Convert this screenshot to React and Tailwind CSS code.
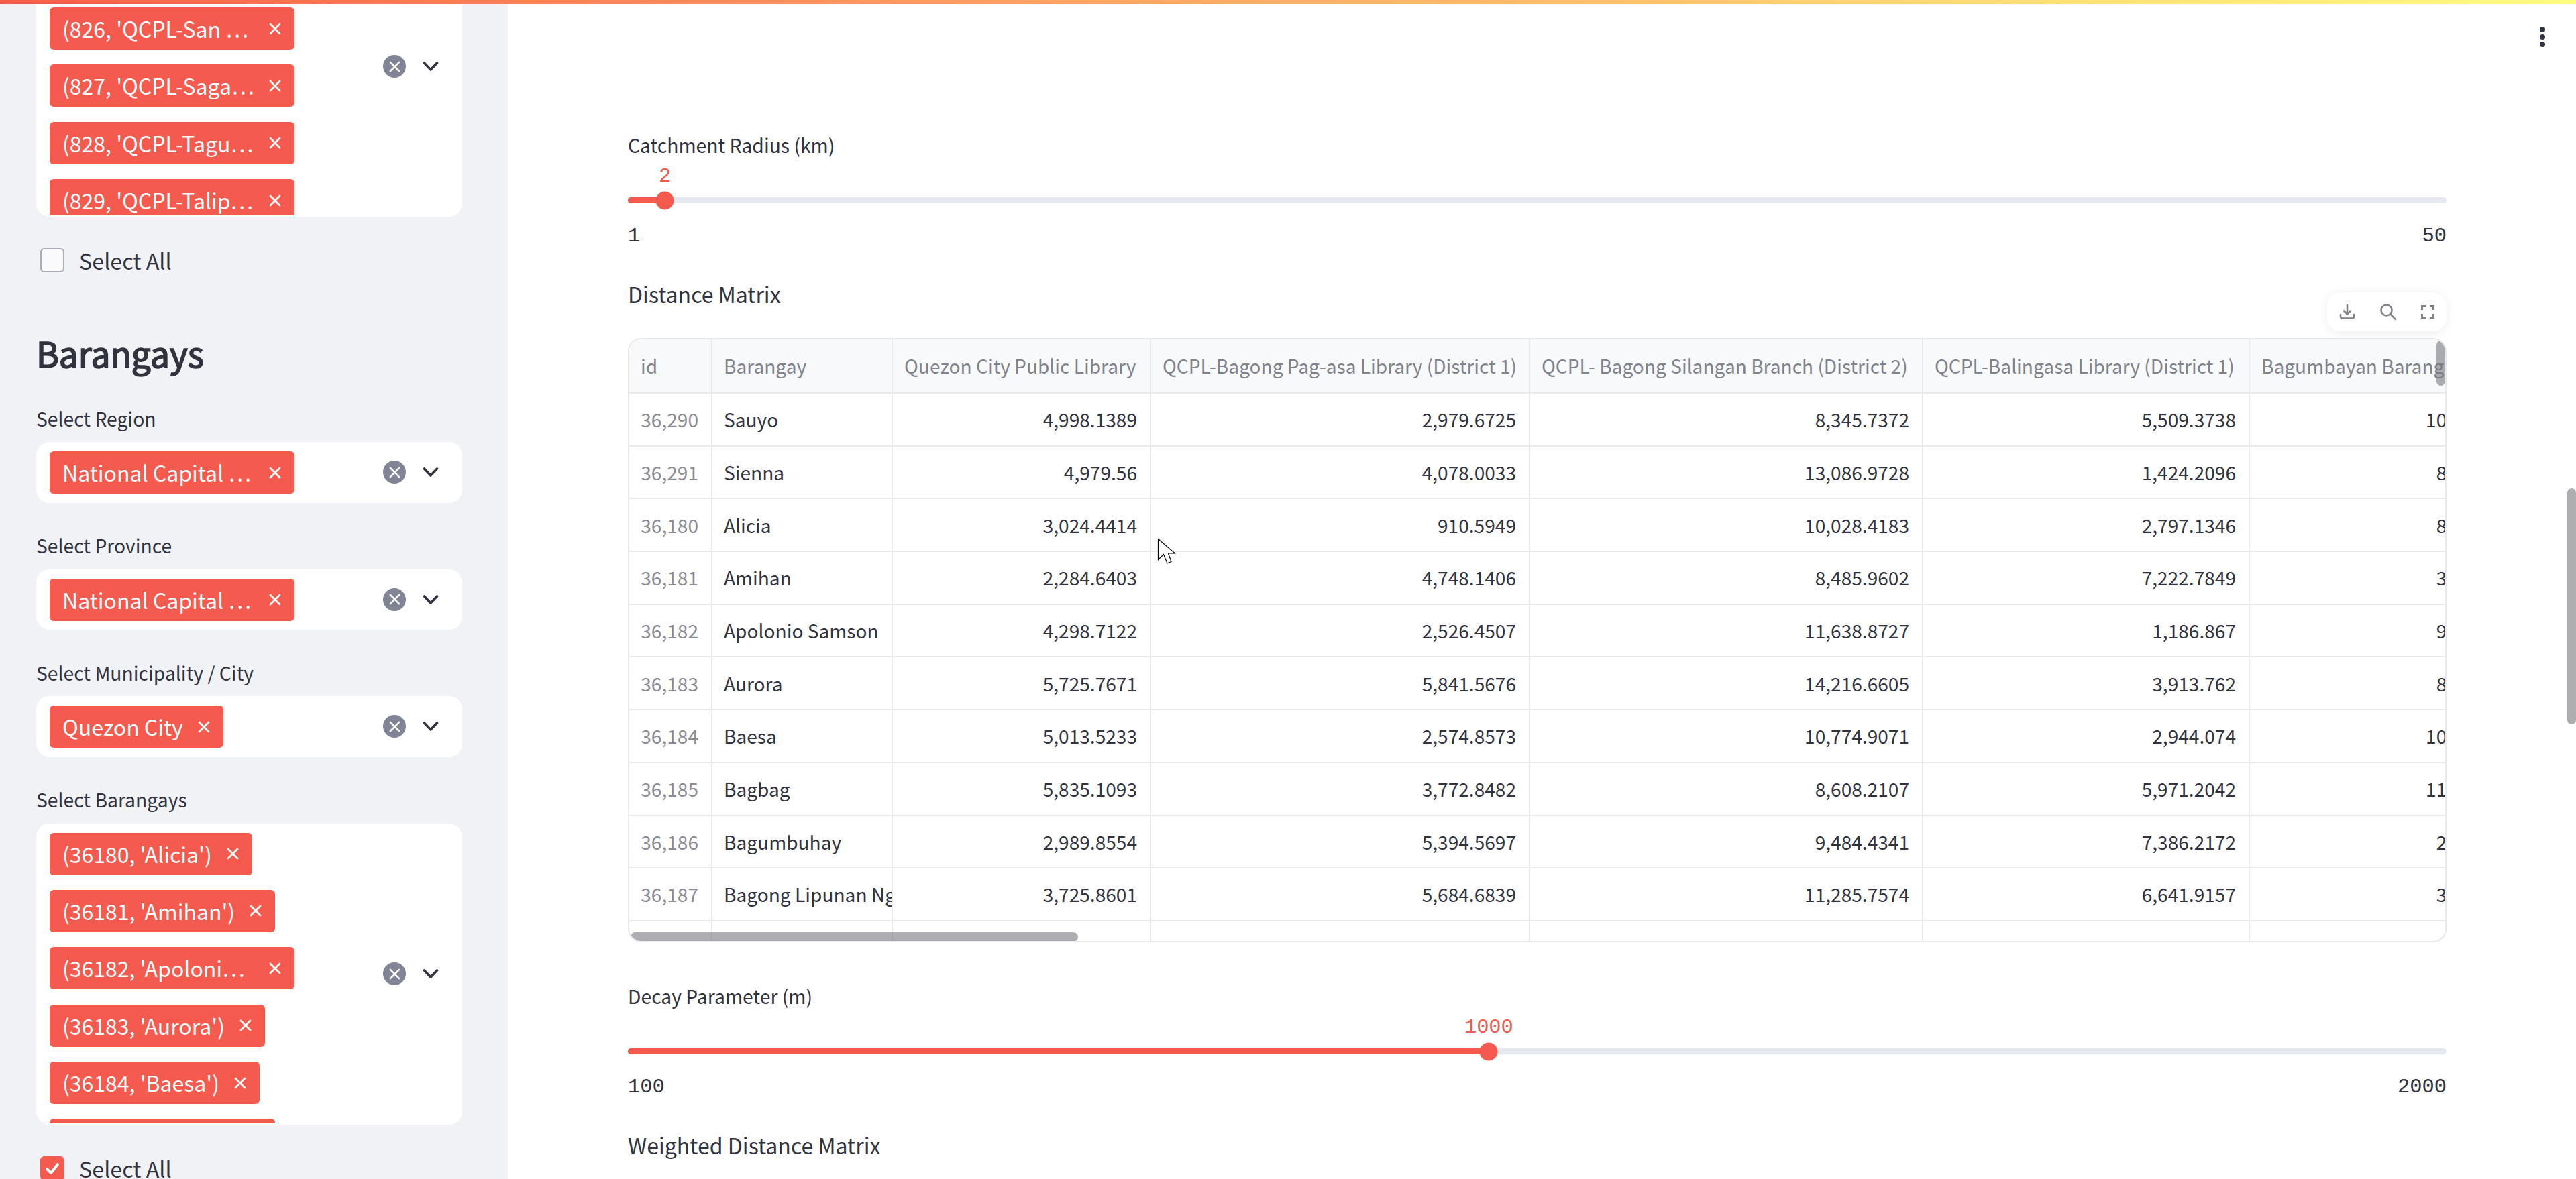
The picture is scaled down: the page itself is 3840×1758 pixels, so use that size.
import React from "react";

const rows = [
	["36,290", "Sauyo", "4,998.1389", "2,979.6725", "8,345.7372", "5,509.3738", "10,214.5083"],
	["36,291", "Sienna", "4,979.56", "4,078.0033", "13,086.9728", "1,424.2096", "8,316.4417"],
	["36,180", "Alicia", "3,024.4414", "910.5949", "10,028.4183", "2,797.1346", "8,102.6635"],
	["36,181", "Amihan", "2,284.6403", "4,748.1406", "8,485.9602", "7,222.7849", "3,540.2291"],
	["36,182", "Apolonio Samson", "4,298.7122", "2,526.4507", "11,638.8727", "1,186.867", "9,075.3128"],
	["36,183", "Aurora", "5,725.7671", "5,841.5676", "14,216.6605", "3,913.762", "8,660.1954"],
	["36,184", "Baesa", "5,013.5233", "2,574.8573", "10,774.9071", "2,944.074", "10,428.7702"],
	["36,185", "Bagbag", "5,835.1093", "3,772.8482", "8,608.2107", "5,971.2042", "11,093.5146"],
	["36,186", "Bagumbuhay", "2,989.8554", "5,394.5697", "9,484.4341", "7,386.2172", "2,871.0369"],
	["36,187", "Bagong Lipunan Ng Crame", "3,725.8601", "5,684.6839", "11,285.7574", "6,641.9157", "3,932.4480"],
];

const headers = [
	"id",
	"Barangay",
	"Quezon City Public Library",
	"QCPL-Bagong Pag-asa Library (District 1)",
	"QCPL- Bagong Silangan Branch (District 2)",
	"QCPL-Balingasa Library (District 1)",
	"Bagumbayan Barangay Hall (District 1)",
];

function XIcon({ className }) {
	return (
		<svg className={className} viewBox="0 0 18 18" fill="none" stroke="currentColor" strokeWidth="2.8" strokeLinecap="round">
			<path d="M2 2l14 14M16 2L2 16" />
		</svg>
	);
}

function Tag({ children, wide }) {
	return (
		<div
			className={`flex h-[63px] shrink-0 items-center justify-between rounded-[6px] bg-[#f55a4e] pl-[19px] pr-[20px] text-white text-[32px] leading-[61px] whitespace-nowrap ${wide ? "w-[365px]" : "w-fit gap-[22px]"}`}
		>
			<span>{children}</span>
			<XIcon className="h-[18px] w-[18px]" />
		</div>
	);
}

function BoxIcons() {
	return (
		<div className="flex shrink-0 items-center gap-[25px] pr-[33px]">
			<div className="flex h-[34px] w-[34px] items-center justify-center rounded-full bg-[#808495] text-white">
				<XIcon className="h-[17px] w-[17px]" />
			</div>
			<svg className="h-[16px] w-[24px] text-[#31333f]" viewBox="0 0 24 16" fill="none" stroke="currentColor" strokeWidth="3.6" strokeLinecap="round" strokeLinejoin="round">
				<path d="M2.5 3l9.5 10 9.5-10" />
			</svg>
		</div>
	);
}

function MultiSelect({ tags, className, listClass }) {
	return (
		<div className={`flex items-center rounded-[20px] bg-white p-[2px] ${className}`}>
			<div className={`flex h-full min-w-0 flex-1 flex-col gap-[22.4px] overflow-hidden pl-[18px] ${listClass}`}>
				{tags.map((t) => (
					<Tag key={t.text} wide={t.wide}>
						{t.text}
					</Tag>
				))}
			</div>
			<BoxIcons />
		</div>
	);
}

function Field({ label, tags, className }) {
	return (
		<div className="mb-[41.5px]">
			<div className="h-[44px] text-[28.3px] leading-[43px]">{label}</div>
			<MultiSelect tags={tags} className={`mt-[13.5px] ${className}`} listClass="pt-[12px]" />
		</div>
	);
}

function SelectAll({ checked, className }) {
	return (
		<div className={`flex items-center gap-[22px] pl-[6px] ${className}`}>
			{checked ? (
				<div className="flex h-[36px] w-[36px] items-center justify-center rounded-[6px] bg-[#f55a4e] text-white">
					<svg className="h-[24px] w-[24px]" viewBox="0 0 24 24" fill="none" stroke="currentColor" strokeWidth="4" strokeLinecap="round" strokeLinejoin="round">
						<path d="M4 13l6 6L20 6" />
					</svg>
				</div>
			) : (
				<div className="h-[36px] w-[36px] rounded-[6px] border-2 border-[#a9acb6] bg-[#fafafc]" />
			)}
			<span className="text-[32.3px] leading-[36px]">Select All</span>
		</div>
	);
}

function Slider({ label, value, min, max, percent, className }) {
	return (
		<div className={className}>
			<div className="h-[44px] text-[28.3px] leading-[44px]">{label}</div>
			<div className="relative h-[45px]">
				<span
					className="absolute top-[3px] -translate-x-1/2 font-['Liberation_Mono',monospace] text-[30.4px] leading-[44px] text-[#f55a4e]"
					style={{ left: `${percent}%` }}
				>
					{value}
				</span>
			</div>
			<div className="relative mt-[11px] h-[9px] rounded-full bg-[#e5e8ef]">
				<div className="h-full rounded-full bg-[#f55a4e]" style={{ width: `${percent}%` }} />
				<div
					className="absolute top-1/2 h-[27px] w-[27px] -translate-x-1/2 -translate-y-1/2 rounded-full bg-[#f55a4e]"
					style={{ left: `${percent}%` }}
				/>
			</div>
			<div className="mt-[28px] flex h-[36px] items-center justify-between pt-[7px] font-['Liberation_Mono',monospace] text-[30.4px] leading-[29px]">
				<span>{min}</span>
				<span>{max}</span>
			</div>
		</div>
	);
}

function Toolbar() {
	return (
		<div className="absolute right-0 top-[-68px] z-10 flex h-[58px] w-[178px] items-center justify-between rounded-[20px] bg-white px-[18px] text-[#818289] shadow-[0_2px_16px_rgba(0,0,0,0.08)]">
			<svg className="h-[24px] w-[24px]" viewBox="0 0 24 24" fill="none" stroke="currentColor" strokeWidth="2.6" strokeLinecap="round" strokeLinejoin="round">
				<path d="M12 2v13M7 10.5l5 5 5-5M2 16v3a2.5 2.5 0 0 0 2.5 2.5h15A2.5 2.5 0 0 0 22 19v-3" />
			</svg>
			<svg className="h-[26px] w-[26px]" viewBox="0 0 26 26" fill="none" stroke="currentColor" strokeWidth="2.6" strokeLinecap="round">
				<circle cx="10.5" cy="10.5" r="8" />
				<path d="M16.5 16.5l7.5 7.5" />
			</svg>
			<svg className="h-[20px] w-[20px]" viewBox="0 0 20 20" fill="none" stroke="currentColor" strokeWidth="3">
				<path d="M1.5 7V1.5H7M13 1.5h5.5V7M18.5 13v5.5H13M7 18.5H1.5V13" />
			</svg>
		</div>
	);
}

function DistanceTable() {
	const cell = "overflow-hidden whitespace-nowrap border-b-2 border-r-2 border-[#eaeaec] pl-[17px] pr-[19px]";
	return (
		<div className="relative mt-[42px]">
			<Toolbar />
			<div className="relative h-[901px] overflow-hidden rounded-[20px] border-2 border-[#e9e9eb] bg-white">
				<table className="w-[2855px] table-fixed border-separate border-spacing-0 text-[28.1px]">
					<colgroup>
						<col className="w-[124px]" />
						<col className="w-[269px]" />
						<col className="w-[385px]" />
						<col className="w-[565px]" />
						<col className="w-[586px]" />
						<col className="w-[487px]" />
						<col className="w-[439px]" />
					</colgroup>
					<thead>
						<tr className="h-[81px] bg-[#f8f9fb] text-[#81838c]">
							{headers.map((h) => (
								<th key={h} className={`${cell} text-left font-normal`}>
									{h}
								</th>
							))}
						</tr>
					</thead>
					<tbody>
						{rows.map((row) => (
							<tr key={row[0]} className="h-[78.7px]">
								{row.map((value, i) => (
									<td
										key={i}
										className={`${cell} ${i === 0 ? "text-right text-[#8b8c93]" : i === 1 ? "text-left" : "text-right"}`}
									>
										{value}
									</td>
								))}
							</tr>
						))}
						<tr className="h-[78.7px]">
							{headers.map((h) => (
								<td key={h} className={cell} />
							))}
						</tr>
					</tbody>
				</table>
				<div className="absolute bottom-[-1px] left-[2px] h-[14px] w-[667px] rounded-full bg-[#77777f]/60" />
				<div className="absolute right-0 top-[2px] h-[67px] w-[13px] rounded-full bg-[#77777f]/60" />
			</div>
		</div>
	);
}

export default function App() {
	return (
		<div className="relative flex h-[1758px] w-[3840px] overflow-hidden bg-white font-['Noto_Sans_CJK_SC',sans-serif] text-[#31333f]">
			<div className="absolute left-0 right-0 top-0 z-20 h-[6px] bg-gradient-to-r from-[#f55a4e] to-[#fffd80]" />

			<aside className="w-[757px] shrink-0 bg-[#f0f2f6] pl-[54px] pr-[68px]">
				<MultiSelect
					className="mt-[-125px] h-[448px]"
					listClass="pt-[134px]"
					tags={[
						{ text: "(826, 'QCPL-San …", wide: true },
						{ text: "(827, 'QCPL-Saga…", wide: true },
						{ text: "(828, 'QCPL-Tagu…", wide: true },
						{ text: "(829, 'QCPL-Talip…", wide: true },
					]}
				/>
				<SelectAll className="mt-[47px]" />
				<h2 className="mb-[39.5px] mt-[84px] h-[72px] text-[51.5px] font-normal leading-[72px] [-webkit-text-stroke:1.6px_#31333f]">Barangays</h2>
				<Field label="Select Region" className="h-[90.5px]" tags={[{ text: "National Capital …", wide: true }]} />
				<Field label="Select Province" className="h-[90.5px]" tags={[{ text: "National Capital …", wide: true }]} />
				<Field label="Select Municipality / City" className="h-[90.5px]" tags={[{ text: "Quezon City" }]} />
				<Field
					label="Select Barangays"
					className="h-[449px]"
					tags={[
						{ text: "(36180, 'Alicia')" },
						{ text: "(36181, 'Amihan')" },
						{ text: "(36182, 'Apoloni…", wide: true },
						{ text: "(36183, 'Aurora')" },
						{ text: "(36184, 'Baesa')" },
						{ text: "(36185, 'Bagbag')" },
					]}
				/>
				<SelectAll checked className="mt-[47.5px]" />
			</aside>

			<main className="min-w-0 flex-1 pl-[179px] pr-[193px] pt-[194px]">
				<Slider label="Catchment Radius (km)" value="2" min="1" max="50" percent={2.03} />
				<div className="mt-[51px] h-[44px] text-[32.1px] leading-[40px]">Distance Matrix</div>
				<DistanceTable />
				<Slider className="mt-[58px]" label="Decay Parameter (m)" value="1000" min="100" max="2000" percent={47.34} />
				<div className="mt-[51px] h-[44px] text-[32.1px] leading-[40px]">Weighted Distance Matrix</div>
			</main>

			<div className="absolute right-[46px] top-[40px] flex flex-col gap-[3px]">
				<span className="h-[8px] w-[8px] rounded-full bg-[#31333f]" />
				<span className="h-[8px] w-[8px] rounded-full bg-[#31333f]" />
				<span className="h-[8px] w-[8px] rounded-full bg-[#31333f]" />
			</div>

			<div className="absolute right-0 top-[728px] h-[352px] w-[13px] rounded-full bg-[#aeaeb2]" />

			<svg className="absolute left-[1725px] top-[802px] h-[40px] w-[28px]" viewBox="0 0 28 40" fill="#fff" stroke="#000" strokeWidth="1.2">
				<path d="M1.5 1.5v31l8-8 5.5 13.5 6-2.5-4.5-12.5h10z" />
			</svg>
		</div>
	);
}
